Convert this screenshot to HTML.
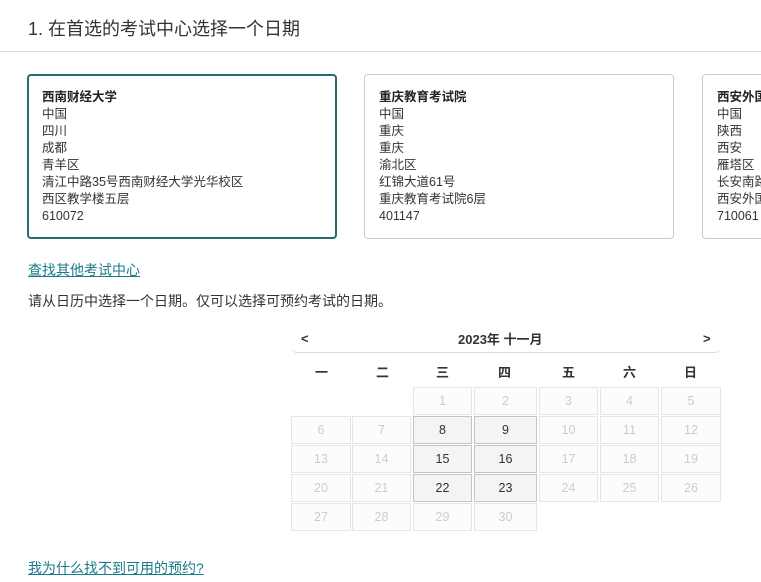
<!DOCTYPE html>
<html><head><meta charset="utf-8"><style>
*{margin:0;padding:0;box-sizing:border-box}
body{width:761px;height:582px;overflow:hidden;background:#fff;font-family:"Liberation Sans","Noto Sans CJK SC",sans-serif;color:#333;position:relative}
.t{position:absolute;left:28px;top:15px;font-size:18px;color:#333}
.hr{position:absolute;left:0;top:51px;width:761px;height:1px;background:#ddd}
.card{position:absolute;top:74px;width:310px;height:165px;border:1px solid #ccc;border-radius:4px;padding:14px 0 0 14px;font-size:12.5px;line-height:17px;color:#333;overflow:hidden;white-space:nowrap}
.card b{font-weight:bold;color:#222}
.sel{border:2px solid #1f6f6f;padding:13px 0 0 13px}
a{position:absolute;color:#1a7a8a;font-size:14px;text-decoration:underline}
.p{position:absolute;left:28px;top:291px;font-size:14px;color:#333}
.mh{position:absolute;left:291px;top:322px;width:430px;height:31px;border-bottom:1px solid #ddd;border-radius:0 0 6px 6px;font-size:13px;font-weight:bold}
.mh span{position:absolute;top:7px}
.wd{position:absolute;top:362px;width:61px;text-align:center;font-size:13px;font-weight:bold;color:#333}
.c{position:absolute;width:59px;height:28px;border:1px solid #e6e6e6;background:#fcfcfc;text-align:center;line-height:26px;font-size:12.5px;color:#ccc}
.c.a{background:#f4f4f4;border-color:#c4c4c4;color:#333}
</style></head><body>
<div class="t">1. 在首选的考试中心选择一个日期</div>
<div class="hr"></div>
<div class="card sel" style="left:27px"><b>西南财经大学</b><br>中国<br>四川<br>成都<br>青羊区<br>清江中路35号西南财经大学光华校区<br>西区教学楼五层<br>610072</div>
<div class="card" style="left:364px"><b>重庆教育考试院</b><br>中国<br>重庆<br>重庆<br>渝北区<br>红锦大道61号<br>重庆教育考试院6层<br>401147</div>
<div class="card" style="left:702px;width:80px"><b>西安外国语大学</b><br>中国<br>陕西<br>西安<br>雁塔区<br>长安南路<br>西安外国语<br>710061</div>
<a style="left:28px;top:260px">查找其他考试中心</a>
<div class="p">请从日历中选择一个日期。仅可以选择可预约考试的日期。</div>
<div class="mh"><span style="left:10px;top:9px">&lt;</span><span style="left:167px;top:7px">2023年 十一月</span><span style="left:412px;top:9px">&gt;</span></div>
<div class="wd" style="left:291px">一</div><div class="wd" style="left:352px">二</div><div class="wd" style="left:412px">三</div><div class="wd" style="left:474px">四</div><div class="wd" style="left:538px">五</div><div class="wd" style="left:599px">六</div><div class="wd" style="left:660px">日</div>
<div id="cal"></div>
<script>
var xs=[291,352,413,474,539,600,661],ws=[60,59,59,63,59,59,60],ys=[387,416,445,474,503];
var av=[8,9,15,16,22,23],h='';
for(var d=1;d<=30;d++){var i=d+1,r=Math.floor(i/7),c=i%7;
h+='<div class="c'+(av.indexOf(d)>=0?' a':'')+'" style="left:'+xs[c]+'px;top:'+ys[r]+'px;width:'+ws[c]+'px">'+d+'</div>';}
document.getElementById('cal').innerHTML=h;
</script>
<a style="left:28px;top:558px">我为什么找不到可用的预约?</a>
</body></html>
